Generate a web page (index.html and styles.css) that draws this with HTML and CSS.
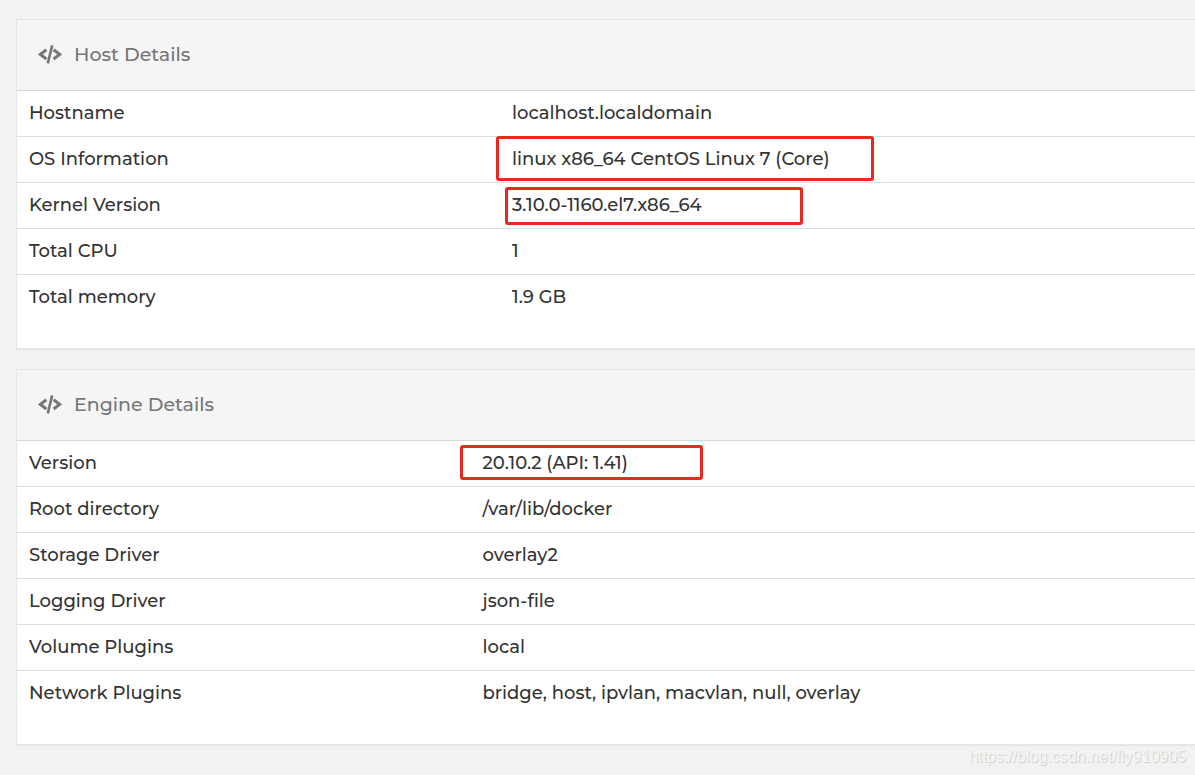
FILE: index.html
```html
<!DOCTYPE html>
<html lang="en">
<head>
<meta charset="utf-8">
<title>Host Details</title>
<link rel="stylesheet" href="styles.css">
</head>
<body>
<svg class="sprite" aria-hidden="true">
  <symbol id="code" viewBox="0 0 24 20">
    <path d="M8.4 4.8 2.4 9.4l6 4.6M15.6 4.8l6 4.6-6 4.6" fill="none" stroke="currentColor" stroke-width="3"/>
    <path d="M14.2.4 9.8 18.4" fill="none" stroke="currentColor" stroke-width="2.6"/>
  </symbol>
</svg>
<main class="page">
  <section class="widget">
    <h2 class="widget-header"><svg class="icon" aria-hidden="true"><use href="#code"/></svg>Host Details</h2>
    <table class="details host">
      <tbody>
        <tr><th scope="row">Hostname</th><td>localhost.localdomain</td></tr>
        <tr><th scope="row">OS Information</th><td>linux x86_64 CentOS Linux 7 (Core)<span class="mark mark-os"></span></td></tr>
        <tr><th scope="row">Kernel Version</th><td>3.10.0-1160.el7.x86_64<span class="mark mark-kernel"></span></td></tr>
        <tr><th scope="row">Total CPU</th><td>1</td></tr>
        <tr><th scope="row">Total memory</th><td>1.9 GB</td></tr>
      </tbody>
    </table>
  </section>
  <section class="widget">
    <h2 class="widget-header"><svg class="icon" aria-hidden="true"><use href="#code"/></svg>Engine Details</h2>
    <table class="details engine">
      <tbody>
        <tr><th scope="row">Version</th><td>20.10.2 (API: 1.41)<span class="mark mark-version"></span></td></tr>
        <tr><th scope="row">Root directory</th><td>/var/lib/docker</td></tr>
        <tr><th scope="row">Storage Driver</th><td>overlay2</td></tr>
        <tr><th scope="row">Logging Driver</th><td>json-file</td></tr>
        <tr><th scope="row">Volume Plugins</th><td>local</td></tr>
        <tr><th scope="row">Network Plugins</th><td>bridge, host, ipvlan, macvlan, null, overlay</td></tr>
      </tbody>
    </table>
  </section>
</main>
<div class="watermark">https://blog.csdn.net/fly910905</div>
</body>
</html>
```
FILE: styles.css
```css
* { box-sizing: border-box; }
body {
  margin: 0;
  background: #f2f2f2;
  color: #333;
  font-family: Montserrat, Inter, sans-serif;
  font-size: 18px;
  font-weight: 500;
  line-height: 24px;
}
.sprite { position: absolute; width: 0; height: 0; }
.page {
  display: flex;
  flex-direction: column;
  gap: 20px;
  padding: 19px 0 30px 16px;
}
.widget {
  background: #fff;
  border: 1px solid #e6e6e6;
  border-right: 0;
  box-shadow: 0 1px 1px rgba(0, 0, 0, 0.05);
  padding-bottom: 28px;
}
.widget-header {
  display: flex;
  align-items: center;
  gap: 12px;
  height: 70px;
  margin: 0;
  padding: 0 21px;
  background: #f5f5f5;
  color: #767676;
  font-size: 19px;
  font-weight: 500;
}
.icon { width: 24px; height: 20px; }
.details {
  width: 100%;
  table-layout: fixed;
  border-collapse: separate;
  border-spacing: 0;
}
.details th,
.details td {
  position: relative;
  height: 46px;
  padding: 0 12px 2px;
  border-top: 1px solid #ddd;
  font-weight: 500;
  text-align: left;
  vertical-align: middle;
}
.details tr:first-child > * { border-top-color: #d8d8d8; }
.host th { width: 41%; }
.engine th { width: 38.5%; }
.mark {
  position: absolute;
  border: 3px solid #e8291c;
  border-radius: 3px;
}
.mark-os { left: -4px; top: -1px; width: 378px; height: 45px; }
.mark-kernel { left: 5px; top: 4px; width: 298px; height: 38px; }
.mark-version { left: -11px; top: 4px; width: 243px; height: 35px; }
.watermark {
  position: absolute;
  right: 9px;
  bottom: 8px;
  color: #f5f5f5;
  font: 16px/20px "Liberation Sans", Arial, sans-serif;
  text-shadow: 1px 1px 1px #ccc;
}
```
